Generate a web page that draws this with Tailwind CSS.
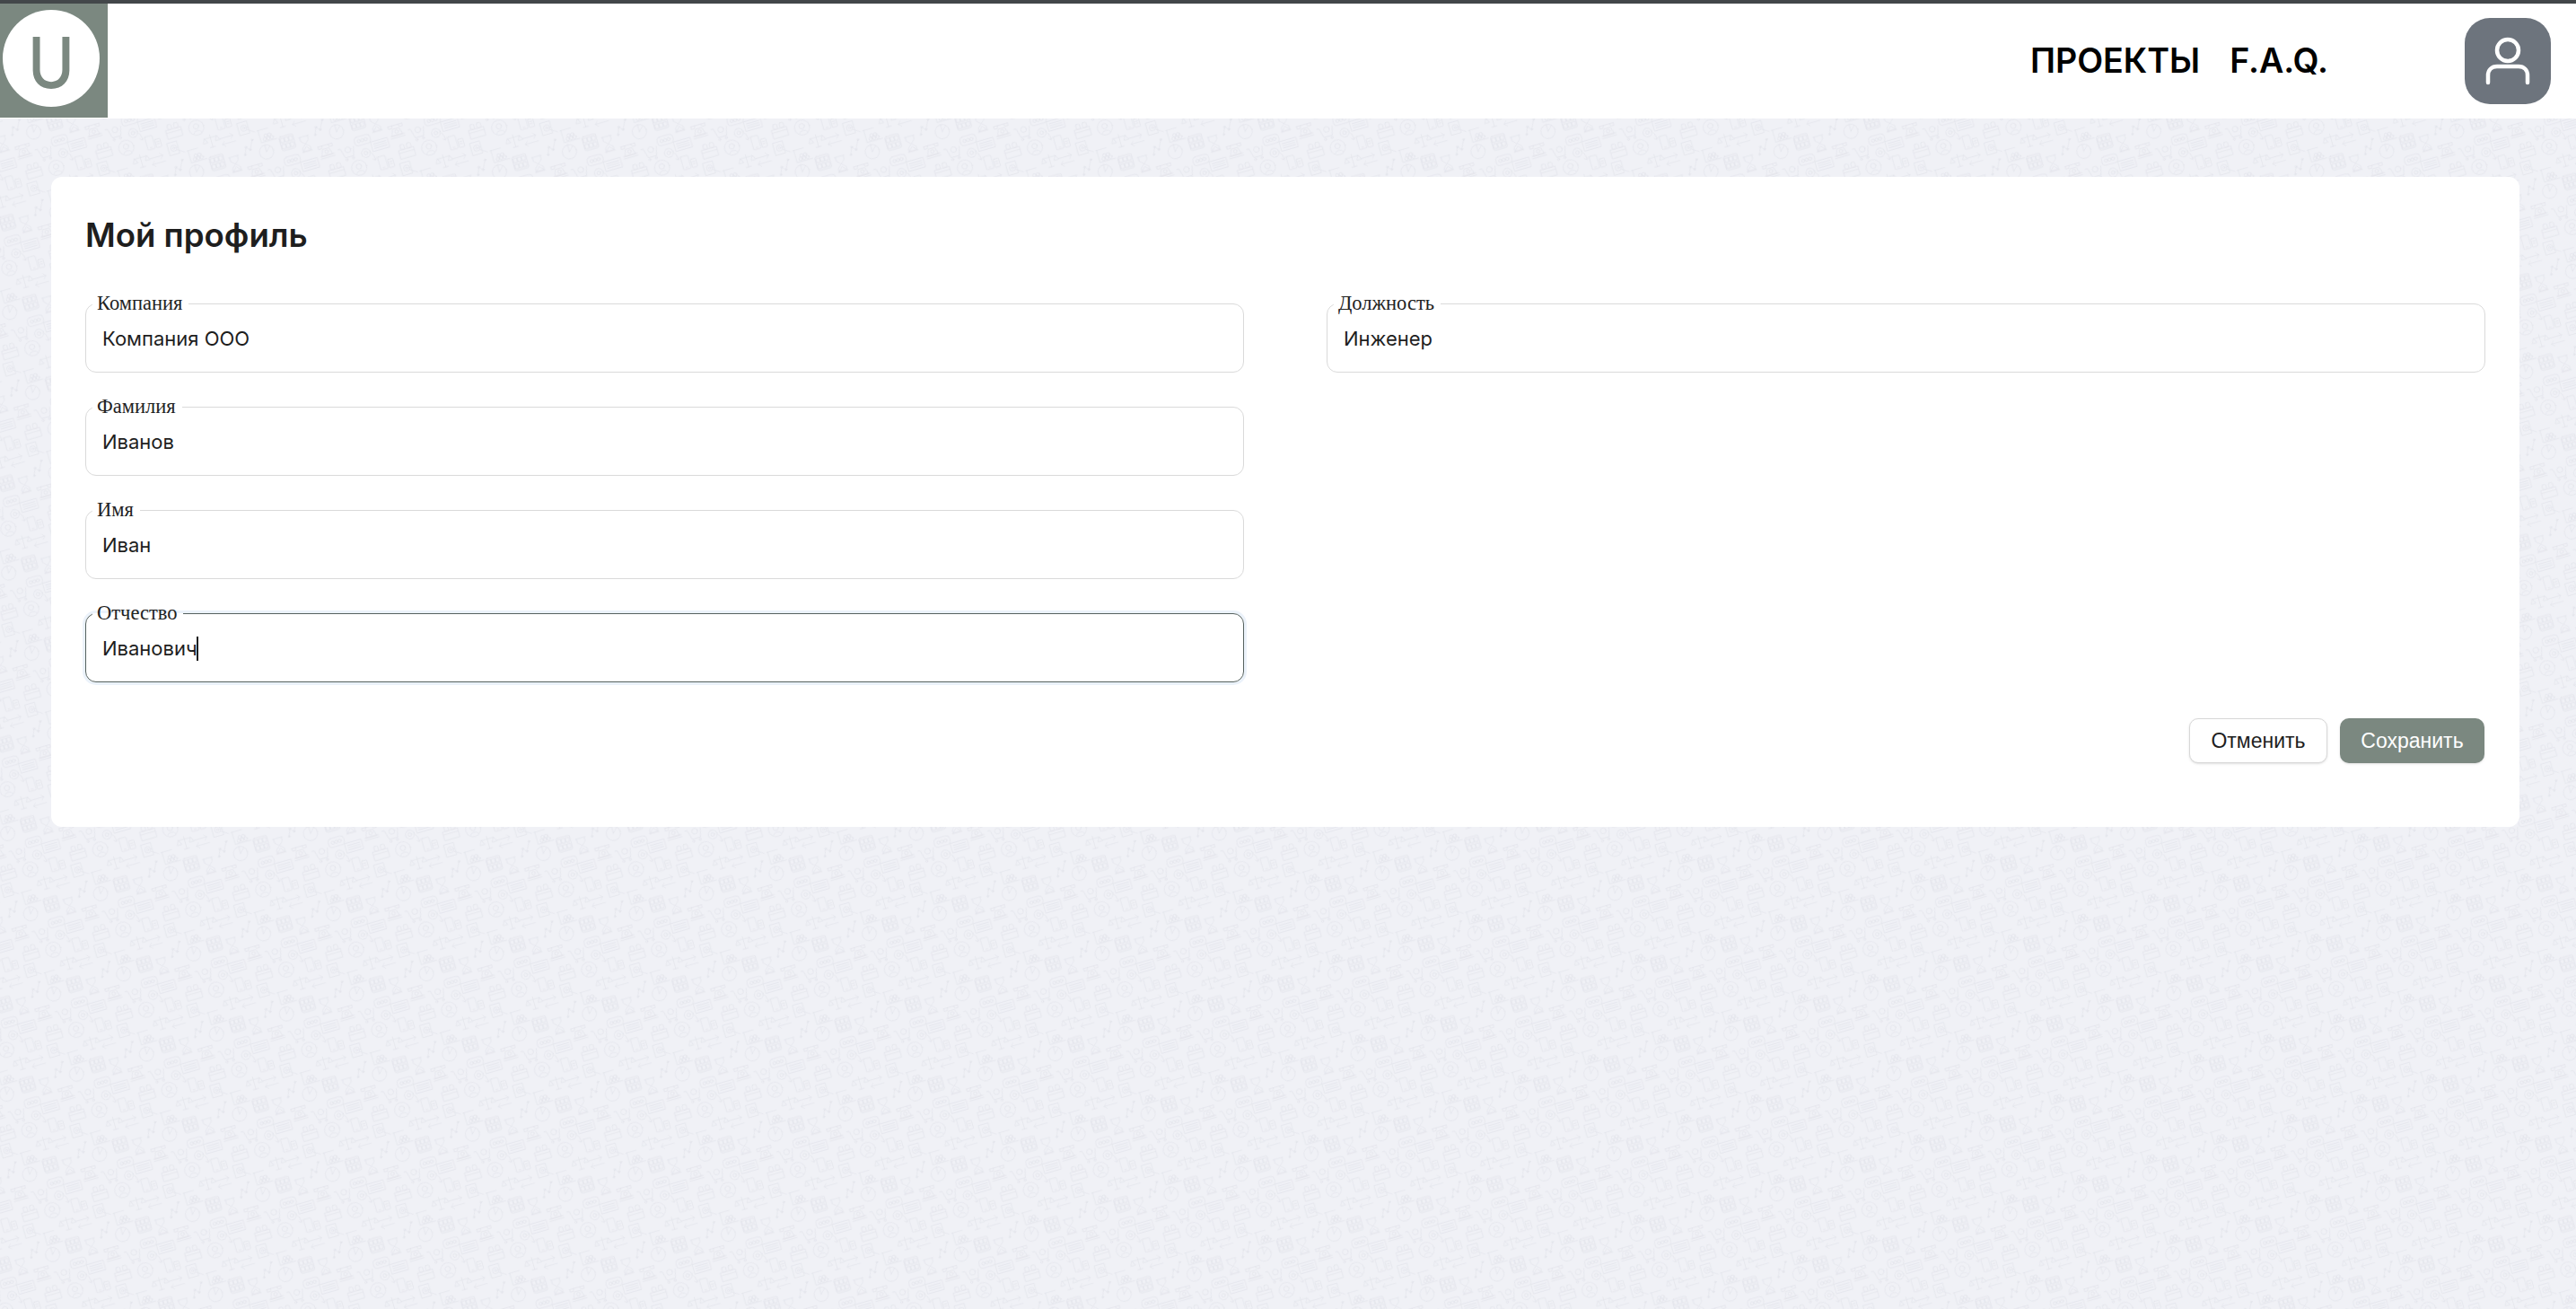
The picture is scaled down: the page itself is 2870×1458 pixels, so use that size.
<!doctype html>
<html lang="ru">
<head>
  <meta charset="UTF-8">
  <meta name="viewport" content="width=device-width, initial-scale=1.0">
  <title>Мой профиль</title>
  <script src="https://cdn.jsdelivr.net/npm/@tailwindcss/browser@4"></script>
</head>
<body class="bg-[#f0f1f6] font-['Inter',sans-serif] text-[#1e1e1e]">
<div class="relative h-[1458px] w-[2870px] overflow-hidden">

  <!-- icon wallpaper -->
  <svg class="absolute inset-0" width="2870" height="1458" aria-hidden="true">
    <defs>
      <g id="tile" fill="none" stroke="#e1e3ea" stroke-width="0.7" stroke-linecap="round" stroke-linejoin="round">
        <!-- pie -->
        <g><circle r="8"/><path d="M0 0V-8M0 0L5.5 -5.8"/></g>
        <!-- scales -->
        <g transform="translate(25.2 64.1)"><path d="M0 -7V7M-3 7H3M-7 -4H7M-7 -4L-9.5 1H-4.5ZM7 -4L4.5 1H9.5Z"/></g>
        <!-- arrows -->
        <g transform="translate(43.2 68.1)"><path d="M-8 -3.5H7M4 -6.5L7 -3.5L4 -.5M8 3.5H-7M-4 .5L-7 3.5L-4 6.5"/></g>
        <!-- zigzag -->
        <g transform="translate(63.3 82.6)"><path d="M-6 7L-3 -1L1 3L6 -7"/><circle cx="-6" cy="7" r="1"/><circle cx="-3" cy="-1" r="1"/><circle cx="1" cy="3" r="1"/><circle cx="6" cy="-7" r="1"/></g>
        <!-- chart -->
        <g transform="translate(5.2 74.6)"><path d="M-9 -7L3 -7M-8 -7V7H10"/><circle cx="-3" cy="4" r="1.9"/><circle cx="1" cy="4" r="1.9"/><circle cx="5" cy="4" r="1.9"/><circle cx="-1" cy="0.5" r="1.9"/><circle cx="3" cy="0.5" r="1.9"/></g>
        <!-- grid -->
        <g transform="translate(25.3 89)"><rect x="-8" y="-8" width="16" height="16" rx="2"/><rect x="-6.5" y="-6" width="3.5" height="5"/><rect x="-1.7" y="-6" width="3.5" height="5"/><rect x="3" y="-6" width="3.5" height="5"/><rect x="-6.5" y="1" width="3.5" height="5"/><rect x="-1.7" y="1" width="3.5" height="5"/><rect x="3" y="1" width="3.5" height="5"/></g>
        <!-- hourglass -->
        <g transform="translate(44.1 3.4)"><path d="M-5.5 -8.5H5.5M-5.5 8.5H5.5M-4.5 -8.5V-4L0 0L4.5 -4V-8.5M-4.5 8.5V4L0 0L4.5 4V8.5M-4 7.5L0 3L4 7.5Z"/></g>
        <!-- telephone -->
        <g transform="translate(64.4 17.1)"><path d="M-8 -6.5H8M-8 -6.5V-3.5H-4.5L-3.5 -6.5M8 -6.5V-3.5H4.5L3.5 -6.5M-3.5 -2.5H3.5L6 5H-6ZM-8 7.5H8M-8 5H8"/><circle cy="1" r="2"/></g>
        <!-- cart -->
        <g transform="translate(5.1 25.7)"><path d="M-9 -6H-6.5L-3.5 5H6L8.5 -5"/><circle r="3.2" cx="1.5" cy="-3"/><circle cx="-2.5" cy="7.5" r="1.2"/><circle cx="5" cy="7.5" r="1.2"/></g>
        <!-- brick -->
        <g transform="translate(25 16.8)"><rect x="-9" y="-5" width="18" height="10" rx="3.5"/><circle cx="-4" cy="0" r="1.8"/><circle cx="0" cy="0" r="1.8"/><circle cx="4" cy="0" r="1.8"/></g>
        <!-- banknote -->
        <g transform="translate(42.9 26.9)"><rect x="-9.5" y="-5.5" width="19" height="11"/><path d="M-7 -2.5H7M-7 0H7M-7 2.5H7"/></g>
        <!-- coin with arrow -->
        <g transform="translate(27 33.7)"><circle cx="-2" cy="-2" r="5"/><circle cx="-2" cy="-2" r="2"/><path d="M4 0C6 2 6 5 6 8M3.5 6.5L6 8.5L8 6"/></g>
        <!-- person -->
        <g transform="translate(13.3 45.4)"><circle r="8.5"/><circle cy="-1.5" r="3"/><path d="M-4.5 6C-4 2.5 4 2.5 4.5 6"/></g>
        <!-- phone and tablet -->
        <g transform="translate(43.9 47.3)"><rect x="-8" y="-7.5" width="8.5" height="15" rx="1"/><rect x="2" y="-2" width="6" height="9.5" rx="1"/><path d="M-5 5.5H-3M3.5 1H6.5M3.5 3.5H6.5"/></g>
        <!-- box -->
        <g transform="translate(69.4 41.7)"><rect x="-8.5" y="-2.5" width="17" height="10"/><rect x="-6" y="-8" width="4.5" height="5.5" rx="1"/><rect x="1.5" y="-8" width="4.5" height="5.5" rx="1"/><path d="M-8.5 1H8.5"/></g>
        <!-- magnifier -->
        <g transform="translate(65.5 61.4)"><rect x="-7.5" y="-8" width="11" height="14"/><circle cx="-1.5" cy="-1" r="3.5"/><circle cx="-1.5" cy="-1" r="1.2"/><path d="M1.5 1.5L9 6.5"/></g>
      </g>
      <pattern id="wallpaper" patternUnits="userSpaceOnUse" width="81.1" height="92.9" patternTransform="translate(163.3 1174) rotate(-16)">
        <use href="#tile"/>
        <use href="#tile" x="-81.1"/>
        <use href="#tile" x="81.1"/>
        <use href="#tile" y="-92.9"/>
        <use href="#tile" y="92.9"/>
        <use href="#tile" x="-81.1" y="-92.9"/>
        <use href="#tile" x="81.1" y="-92.9"/>
        <use href="#tile" x="-81.1" y="92.9"/>
        <use href="#tile" x="81.1" y="92.9"/>
      </pattern>
    </defs>
    <rect width="2870" height="1458" fill="url(#wallpaper)"/>
  </svg>

  <div class="relative h-[4px] bg-[#43474a]"></div>

  <header class="relative flex h-[128px] items-center justify-between bg-white">
    <div class="flex h-[127px] w-[120px] self-start bg-[#7b8880] pl-[3px] pt-[7px]">
      <div class="flex h-[108px] w-[108px] items-center justify-center rounded-full bg-white pt-[9px] text-[78px] leading-none font-medium text-[#7b8880]"><span class="scale-x-90">U</span></div>
    </div>
    <div class="flex items-center">
      <nav class="flex gap-[33px] text-[37.6px] leading-[46px] font-semibold text-black">
        <a>ПРОЕКТЫ</a>
        <a>F.A.Q.</a>
      </nav>
      <button class="mr-[28px] ml-[152px] flex h-[96px] w-[96px] items-center justify-center rounded-[28px] bg-[#6d747d]">
        <svg width="96" height="96" viewBox="0 0 96 96" fill="none" stroke="white" stroke-width="4.5" stroke-linecap="round">
          <circle cx="48" cy="36" r="12"/>
          <path d="M26 72V64C26 58 30 54 36 54H60C66 54 70 58 70 64V72"/>
        </svg>
      </button>
    </div>
  </header>

  <main class="relative pt-[65px] pr-[63px] pl-[57px]">
    <section class="rounded-[12px] bg-white px-[38px] pt-[43px] pb-[71px]">
      <h1 class="mb-[41px] text-[36.6px] leading-[44px] font-semibold">Мой профиль</h1>

      <div class="grid grid-cols-2 gap-x-[92px]">
        <div class="flex flex-col gap-[25px]">
          <fieldset class="h-[90px] rounded-[12px] border border-[#dadada] pl-[18px]">
            <legend class="ml-[-11px] pr-[7px] pl-[5px] font-['Liberation_Serif',serif] text-[22.5px] leading-[26px] text-[#222]">Компания</legend>
            <div class="pt-[11px] text-[22px] leading-[30px]">Компания ООО</div>
          </fieldset>
          <fieldset class="h-[90px] rounded-[12px] border border-[#dadada] pl-[18px]">
            <legend class="ml-[-11px] pr-[7px] pl-[5px] font-['Liberation_Serif',serif] text-[22.5px] leading-[26px] text-[#222]">Фамилия</legend>
            <div class="pt-[11px] text-[22px] leading-[30px]">Иванов</div>
          </fieldset>
          <fieldset class="h-[90px] rounded-[12px] border border-[#dadada] pl-[18px]">
            <legend class="ml-[-11px] pr-[7px] pl-[5px] font-['Liberation_Serif',serif] text-[22.5px] leading-[26px] text-[#222]">Имя</legend>
            <div class="pt-[11px] text-[22px] leading-[30px]">Иван</div>
          </fieldset>
          <fieldset class="h-[90px] rounded-[12px] border border-[#56625f] pl-[18px] shadow-[0_0_0_3px_#ebf2fa]">
            <legend class="ml-[-11px] pr-[7px] pl-[5px] font-['Liberation_Serif',serif] text-[22.5px] leading-[26px] text-[#222]">Отчество</legend>
            <div class="flex items-center pt-[11px] text-[22px] leading-[30px]">Иванович<span class="ml-[-1px] h-[27px] w-[2px] bg-[#1e1e1e]"></span></div>
          </fieldset>
        </div>
        <div>
          <fieldset class="h-[90px] rounded-[12px] border border-[#dadada] pl-[18px]">
            <legend class="ml-[-11px] pr-[7px] pl-[5px] font-['Liberation_Serif',serif] text-[22.5px] leading-[26px] text-[#222]">Должность</legend>
            <div class="pt-[11px] text-[22px] leading-[30px]">Инженер</div>
          </fieldset>
        </div>
      </div>

      <div class="mt-[40px] mr-[1px] flex justify-end gap-[14px] font-['Liberation_Sans',sans-serif] text-[23px]">
        <button class="h-[50px] w-[154px] rounded-[10px] border border-[#d8d8d8] bg-white shadow-sm">Отменить</button>
        <button class="h-[50px] w-[161px] rounded-[10px] bg-[#7b8880] text-white shadow-sm">Сохранить</button>
      </div>
    </section>
  </main>
</div>
</body>
</html>
